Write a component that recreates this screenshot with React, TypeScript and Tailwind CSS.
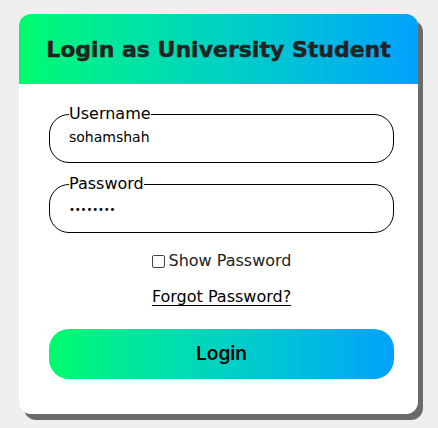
import React from "react";

export default function App() {
  const font = { fontFamily: '"DejaVu Sans", "Open Sans", sans-serif' };
  return (
    <div className="min-h-[428px] w-full bg-[#efefef] pt-[14px] pl-[19px]" style={font}>
      <div className="w-[399px] h-[400px] bg-white rounded-[12px] shadow-[5px_6px_0_#6b6b6b] overflow-hidden flex flex-col">
        <div className="h-[70px] bg-gradient-to-r from-[#00fb6c] to-[#00a1fb] flex items-center justify-center">
          <h1 className="text-[22px] font-bold text-[#222] [-webkit-text-stroke:0.5px_#222]">Login as University Student</h1>
        </div>
        <div className="pl-[30px] pr-[24px] pt-[18px] flex flex-col">
          <fieldset className="border border-black rounded-[20px] px-[19px] pb-[13px] h-[61px]">
            <legend className="px-0 text-[16px] leading-[24px] text-black">Username</legend>
            <div className="text-[14px] leading-[20px] text-black mt-[1px]">sohamshah</div>
          </fieldset>
          <fieldset className="mt-[9px] border border-black rounded-[20px] px-[19px] pb-[13px] h-[61px]">
            <legend className="px-0 text-[16px] leading-[24px] text-black">Password</legend>
            <div className="text-[10px] leading-[20px] text-black mt-[4px] tracking-[-0.1px]">••••••••</div>
          </fieldset>
          <label className="mt-[16px] flex items-center justify-center gap-[4px] text-[16px] leading-[24px] text-[#222]">
            <span className="inline-block w-[13px] h-[13px] border border-[#444] rounded-[2px] bg-white"></span>
            Show Password
          </label>
          <div className="mt-[12px] flex justify-center">
            <a className="text-[16px] leading-[24px] text-black underline underline-offset-[3px]">Forgot Password?</a>
          </div>
          <button className="mt-[20px] h-[50px] w-full rounded-[20px] bg-gradient-to-r from-[#00fb6c] to-[#00a1fb] text-[19px] font-semibold text-black" style={{ fontFamily: '"Inter", sans-serif' }}>
            Login
          </button>
        </div>
      </div>
    </div>
  );
}
